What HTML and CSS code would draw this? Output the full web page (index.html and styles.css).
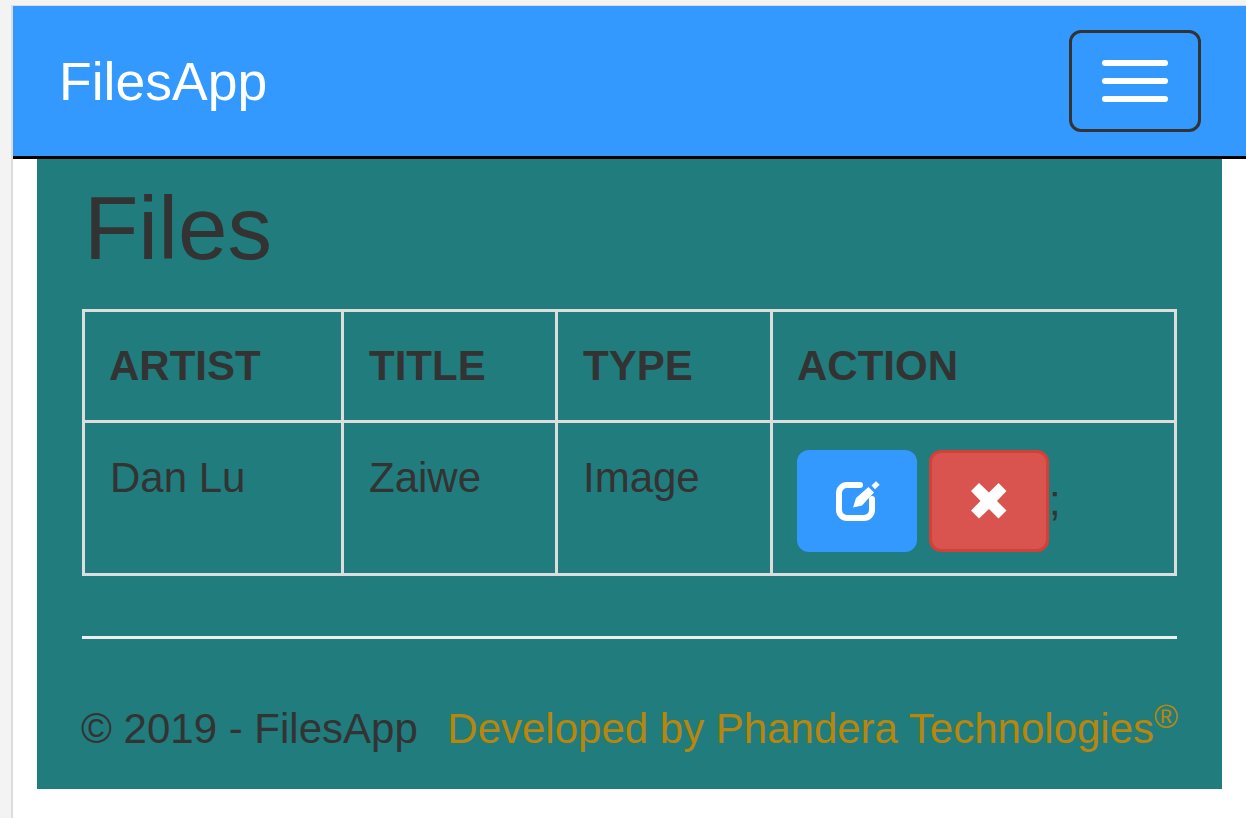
FILE: index.html
```html
<!DOCTYPE html>
<html lang="en">
<head>
<meta charset="utf-8">
<title>FilesApp</title>
<link rel="stylesheet" href="styles.css">
</head>
<body>
<div class="page">
  <nav class="navbar">
    <a class="brand" href="#">FilesApp</a>
    <button class="toggle" type="button" aria-label="Toggle navigation">
      <span class="bar"></span><span class="bar"></span><span class="bar"></span>
    </button>
  </nav>
  <main class="content">
    <h1 class="title">Files</h1>
    <table class="files">
      <colgroup>
        <col class="c1"><col class="c2"><col class="c3"><col class="c4">
      </colgroup>
      <thead>
        <tr><th>ARTIST</th><th>TITLE</th><th>TYPE</th><th>ACTION</th></tr>
      </thead>
      <tbody>
        <tr>
          <td>Dan Lu</td>
          <td>Zaiwe</td>
          <td>Image</td>
          <td class="actions"><a class="btn btn-edit" href="#" aria-label="Edit"><svg class="icon-edit" viewBox="0 0 44 40" aria-hidden="true"><path d="M24 4H11A8 8 0 0 0 3 12V29A8 8 0 0 0 11 37H28A8 8 0 0 0 36 29V18" fill="none" stroke="#fff" stroke-width="6" stroke-linecap="round"/><path d="M17 26.500 20 17 32.500 6 38 11.500 26 24.500z" fill="#fff"/><path d="M35.500 4.500 40 .3 43.700 3.700 39 8.300z" fill="#fff"/></svg></a><a class="btn btn-del" href="#" aria-label="Delete"><svg class="icon-x" viewBox="0 0 36 36" aria-hidden="true"><path d="M8 0 18 9.500 27.500 0 35.500 8 26 18l9.500 9.500-8 8L18 26l-10 9.500-8-8L9.500 18 0 8z" fill="#fff"/></svg></a><span class="semi">;</span></td>
        </tr>
      </tbody>
    </table>
    <hr class="rule">
    <footer class="foot">
      <span>© 2019 - FilesApp</span>
      <span class="dev">Developed by Phandera Technologies<sup class="reg">®</sup></span>
    </footer>
  </main>
</div>
</body>
</html>
```
FILE: styles.css
```css
* { box-sizing: border-box; }
html, body { margin: 0; height: 100%; }
body {
  background: #f3f3f3;
  padding: 5px 0 0 11px;
  font-family: "Liberation Sans", Arial, sans-serif;
  color: #333;
  overflow: hidden;
}
.page {
  background: #fff;
  border-left: 2px solid #dcdcdc;
  border-top: 1px solid #dcdcdc;
  height: 813px;
}
.navbar {
  height: 153px;
  background: #3399ff;
  border-bottom: 3px solid #000;
  display: flex;
  align-items: center;
  justify-content: space-between;
  padding: 0 45px 0 46px;
}
.brand {
  color: #fff;
  font-size: 53.500px;
  line-height: 60px;
  margin-top: 1px;
  text-decoration: none;
}
.toggle {
  width: 132px;
  height: 102px;
  background: transparent;
  border: 3px solid #333;
  border-radius: 12px;
  padding: 0;
  display: flex;
  flex-direction: column;
  align-items: center;
  justify-content: center;
  gap: 12px;
}
.bar {
  display: block;
  width: 66px;
  height: 6px;
  background: #fff;
  border-radius: 3px;
}
.content {
  margin: 0 24px;
  height: 630px;
  background: #217c7e;
  padding: 0 45px;
}
.title {
  margin: 0;
  padding: 15px 0 0 2px;
  font-size: 89px;
  font-weight: 400;
  line-height: 108px;
  height: 150px;
  color: #333;
}
.files {
  width: 100%;
  table-layout: fixed;
  border-collapse: collapse;
  border: 3px solid #ddd;
  font-size: 42px;
}
.c1 { width: 259px; }
.c2 { width: 214px; }
.c3 { width: 215px; }
.files th, .files td {
  border: 3px solid #ddd;
  text-align: left;
  vertical-align: top;
  padding: 25px;
  line-height: 60px;
}
.files th { font-weight: 700; height: 111px; padding-top: 24px; padding-bottom: 24px; }
.files td { height: 153px; }
.files th:first-child, .files th:last-child { padding-left: 24px; }
.files td.actions { padding: 27px 24px 21px 24px; white-space: nowrap; }
.btn {
  display: inline-flex;
  align-items: center;
  justify-content: center;
  width: 120px;
  height: 102px;
  border-radius: 12px;
  vertical-align: top;
}
.btn-edit { background: #3399ff; margin-right: 12px; }
.btn-del { background: #d9534f; border: 3px solid #d43f3a; }
.icon-edit { width: 44px; height: 40px; display: block; margin-left: 1px; }
.icon-x { width: 36px; height: 36px; display: block; }
.semi { line-height: 102px; vertical-align: top; }
.rule {
  margin: 60px 0 0;
  border: 0;
  height: 3px;
  background: #eee;
}
.foot {
  display: flex;
  justify-content: space-between;
  margin-top: 60px;
  margin-left: -1px;
  margin-right: -1px;
  font-size: 42px;
  line-height: 60px;
  white-space: nowrap;
}
.dev { color: #b8860b; }
.reg { font-size: 32.500px; line-height: 0; vertical-align: baseline; position: relative; top: -15px; }
```
